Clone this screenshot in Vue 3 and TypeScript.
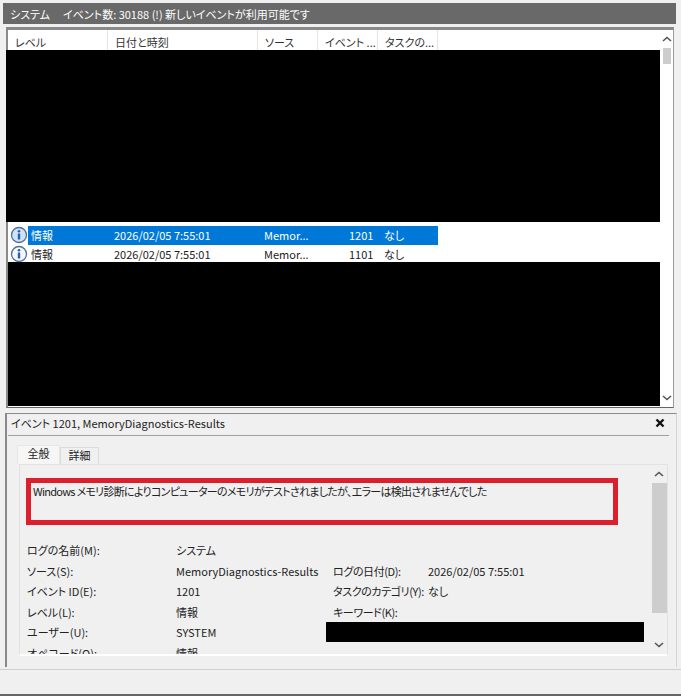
<script setup lang="ts">
const columns = [
  { label: 'レベル', width: 100 },
  { label: '日付と時刻', width: 150 },
  { label: 'ソース', width: 60 },
  { label: 'イベント ...', width: 60 },
  { label: 'タスクの...', width: 60 },
]
const rows = [
  { id: '1201', selected: true },
  { id: '1101', selected: false },
]
const details = [
  ['ログの名前(M):', 'システム', '', ''],
  ['ソース(S):', 'MemoryDiagnostics-Results', 'ログの日付(D):', '2026/02/05 7:55:01'],
  ['イベント ID(E):', '1201', 'タスクのカテゴリ(Y):', 'なし'],
  ['レベル(L):', '情報', 'キーワード(K):', ''],
]
</script>

<template>
  <div class="page">
    <div class="title">
      <span class="title-name">システム</span>
      <span>イベント数: 30188 (!) 新しいイベントが利用可能です</span>
    </div>
    <div class="title-rule"></div>

    <section class="list">
      <div class="list-main">
        <div class="head">
          <div v-for="c in columns" :key="c.label" class="head-cell" :style="{ width: c.width + 'px' }">{{ c.label }}</div>
        </div>
        <div class="black black-top"></div>
        <div class="rows">
          <div v-for="r in rows" :key="r.id" class="row" :class="{ selected: r.selected }">
            <svg class="info" width="18" height="18" viewBox="0 0 18 18">
              <circle cx="9" cy="9" r="7.5" :fill="r.selected ? '#cfe4f7' : '#f4f8fc'" stroke="#4f6f98" stroke-width="1.3" />
              <circle cx="9" cy="5.2" r="1.3" fill="#2a5ea8" />
              <rect x="7.8" y="7.5" width="2.4" height="6" fill="#2a5ea8" />
            </svg>
            <div class="cell c-level">情報</div>
            <div class="cell c-date">2026/02/05 7:55:01</div>
            <div class="cell c-src">Memor...</div>
            <div class="cell c-id">{{ r.id }}</div>
            <div class="cell c-task">なし</div>
          </div>
        </div>
        <div class="black black-bottom"></div>
      </div>
      <div class="vbar">
        <svg class="chev" width="10" height="6" viewBox="0 0 10 6"><path d="M1 5 5 1.5 9 5" fill="none" stroke="#555" stroke-width="1.6" /></svg>
        <div class="vbar-thumb"></div>
        <div class="vbar-fill"></div>
        <svg class="chev" width="10" height="6" viewBox="0 0 10 6"><path d="M1 1 5 4.5 9 1" fill="none" stroke="#555" stroke-width="1.6" /></svg>
      </div>
    </section>

    <section class="detail">
      <div class="detail-head">
        <span>イベント 1201, MemoryDiagnostics-Results</span>
        <svg width="10" height="10" viewBox="0 0 10 10"><path d="M1.5 1.5 8.5 8.5M8.5 1.5 1.5 8.5" stroke="#111" stroke-width="2.4" /></svg>
      </div>
      <div class="tabs">
        <div class="tab active">全般</div>
        <div class="tab">詳細</div>
      </div>
      <div class="tab-body">
        <div class="tab-content">
          <div class="message">Windows メモリ診断によりコンピューターのメモリがテストされましたが、エラーは検出されませんでした</div>
          <div class="grid">
            <template v-for="d in details" :key="d[0]">
              <div>{{ d[0] }}</div>
              <div>{{ d[1] }}</div>
              <div class="label-narrow">{{ d[2] }}</div>
              <div>{{ d[3] }}</div>
            </template>
            <div>ユーザー(U):</div>
            <div>SYSTEM</div>
            <div class="black redact"></div>
            <div>オペコード(O):</div>
            <div>情報</div>
          </div>
        </div>
        <div class="vbar inner">
          <svg class="chev" width="10" height="6" viewBox="0 0 10 6"><path d="M1 5 5 1.5 9 5" fill="none" stroke="#555" stroke-width="1.6" /></svg>
          <div class="inner-thumb"></div>
          <div class="vbar-fill"></div>
          <svg class="chev" width="10" height="6" viewBox="0 0 10 6"><path d="M1 1 5 4.5 9 1" fill="none" stroke="#555" stroke-width="1.6" /></svg>
        </div>
      </div>
    </section>
    <div class="bottom-rule"></div>
    <div class="bottom-space"></div>
    <div class="bottom-line"></div>
  </div>
</template>

<style>
html, body { margin: 0; background: #f0f0f0; }
</style>

<style scoped>
.page {
  width: 681px;
  height: 696px;
  overflow: hidden;
  background: #f0f0f0;
  padding-top: 3px;
  box-sizing: border-box;
  font-family: "Noto Sans CJK JP", "Liberation Sans", sans-serif;
  font-feature-settings: "palt";
  font-size: 11px;
  color: #222;
}
.title {
  height: 21px;
  margin: 0 5px 0 3px;
  padding-left: 7px;
  background: #696969;
  color: #fff;
  display: flex;
  align-items: center;
  line-height: 16px;
}
.title-name { width: 53px; }
.title-rule { height: 3px; }
.list {
  height: 381px;
  margin: 0 7px 0 6px;
  display: flex;
  background: #fff;
  border-top: 3px solid #8a8a8a;
  border-left: 2px solid #8a8a8a;
  border-right: 1px solid #9a9a9a;
  border-bottom: 1px solid #666;
  box-sizing: border-box;
}
.list-main { flex: 1; min-width: 0; }
.head { display: flex; height: 20px; }
.head-cell {
  box-sizing: border-box;
  border-right: 1px solid #e5e5e5;
  padding: 3px 0 0 7px;
  line-height: 18px;
  white-space: nowrap;
  overflow: hidden;
  color: #333;
}
.black { background: #000; }
.black-top { height: 172px; margin-left: -2px; margin-right: -6px; }
.rows { height: 40px; padding-top: 4px; box-sizing: border-box; }
.row {
  display: flex;
  align-items: center;
  height: 19px;
  width: 430px;
  position: relative;
  padding-left: 20px;
  box-sizing: border-box;
  line-height: 19px;
  white-space: nowrap;
  color: #222;
}
.row.selected { background: linear-gradient(#0078d7, #0078d7) no-repeat 20px 0 / 410px 19px; color: #fff; }
.info { position: absolute; left: 2px; top: 0; }
.cell { flex: none; }
.c-level { width: 86px; padding-left: 3px; box-sizing: border-box; }
.c-date { width: 150px; }
.c-src { width: 85px; }
.c-id { width: 35px; }
.black-bottom { height: 144px; }
.vbar {
  width: 13px;
  flex: none;
  display: flex;
  flex-direction: column;
  align-items: center;
  background: #fff;
}
.chev { flex: none; margin: 6px 0; }
.vbar-thumb { width: 8px; height: 16px; background: #cdcdcd; }
.vbar-fill { flex: 1; }
.detail {
  height: 254px;
  margin: 5px 4px 0 5px;
  border-left: 2px solid #8a8a8a;
  border-top: 1px solid #8a8a8a;
  border-right: 1px solid #d4d4d4;
  box-sizing: border-box;
  display: flex;
  flex-direction: column;
  padding-right: 2px;
}
.detail-head {
  height: 22px;
  margin: 0 5px 0 1px;
  padding: 0 4px 3px 3px;
  border-bottom: 1px solid #a0a0a0;
  box-sizing: border-box;
  display: flex;
  align-items: center;
  justify-content: space-between;
  flex: none;
}
.tabs {
  display: flex;
  margin: 9px 0 0 10px;
  height: 19px;
  flex: none;
}
.tab {
  width: 39px;
  border: 1px solid #dcdcdc;
  border-bottom: none;
  background: #f0f0f0;
  text-align: center;
  line-height: 15px;
  box-sizing: border-box;
  margin-top: 2px;
}
.tab.active { width: 43px; margin-top: 0; background: #f6f6f6; border-color: #e6e6e6; }
.tab-body {
  display: flex;
  height: 192px;
  margin: 0 6px 0 12px;
  background: #f0f0f0;
  border: 1px solid #e2e2e2;
  border-bottom: 2px solid #fff;
  box-sizing: border-box;
}
.tab-content { flex: 1; min-width: 0; padding: 13px 0 0 6px; overflow: hidden; }
.message {
  width: 592px;
  height: 47px;
  border: 5px solid #dc1f2d;
  box-sizing: border-box;
  padding: 0 0 0 2px;
  line-height: 16px;
  letter-spacing: -0.72px;
  white-space: nowrap;
}
.grid {
  display: grid;
  grid-template-columns: 149px 157px 95px 1fr;
  grid-auto-rows: 20.5px;
  align-items: center;
  margin: 15px 0 0 1px;
  white-space: nowrap;
  line-height: 20px;
}
.label-narrow { letter-spacing: -0.4px; }
.redact { grid-column: 3 / span 2; height: 20px; width: 318px; margin-left: -7px; }
.vbar.inner { width: 16px; background: #f0f0f0; }
.inner-thumb { width: 15px; height: 130px; background: #cdcdcd; }
.bottom-rule {
  height: 2px;
  border-bottom: 1px solid #cfcfcf;
}
.bottom-space { height: 24px; }
.bottom-line { height: 2px; background: #666; }
</style>
